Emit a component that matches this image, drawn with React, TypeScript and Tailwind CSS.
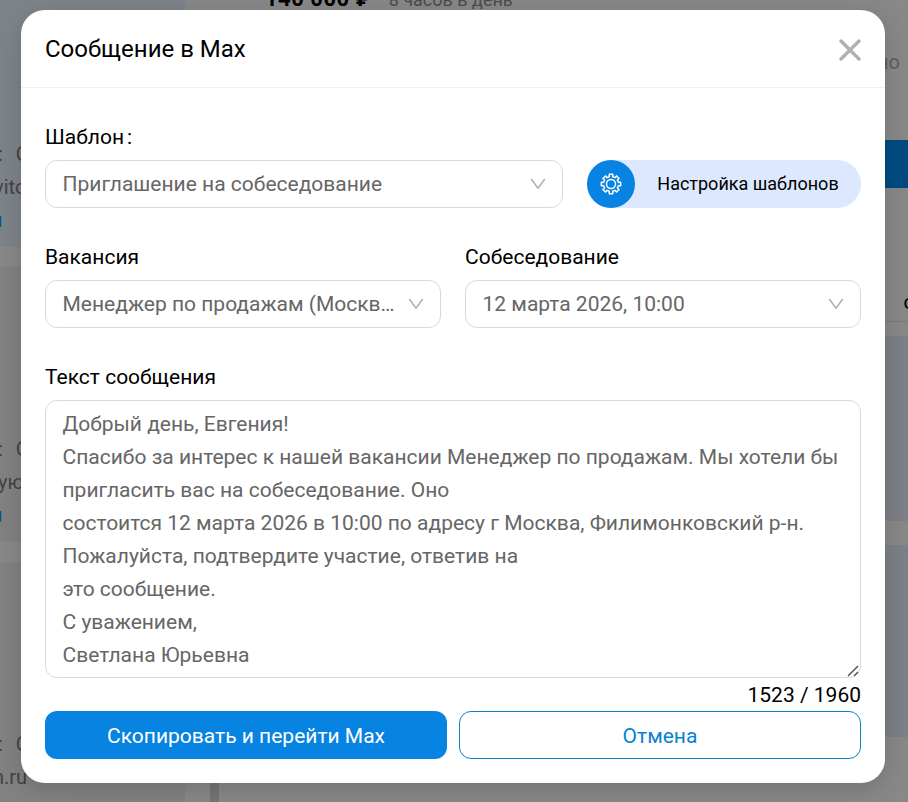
import React, { useState } from "react";

const MESSAGE = [
  "Добрый день, Евгения!",
  "Спасибо за интерес к нашей вакансии Менеджер по продажам. Мы хотели бы",
  "пригласить вас на собеседование. Оно",
  "состоится 12 марта 2026 в 10:00 по адресу г Москва, Филимонковский р-н.",
  "Пожалуйста, подтвердите участие, ответив на",
  "это сообщение.",
  "С уважением,",
  "Светлана Юрьевна",
].join("\n");

const GEAR_TEETH = [0, 45, 90, 135, 180, 225, 270, 315];

// Outline of the gear, one tooth per 45 degrees
function gearPath() {
  const point = (radius: number, deg: number) => {
    const a = ((deg - 90) * Math.PI) / 180;
    return `${(11 + radius * Math.cos(a)).toFixed(2)} ${(11 + radius * Math.sin(a)).toFixed(2)}`;
  };
  const parts = GEAR_TEETH.map(
    (d) => `${point(7.5, d - 13)} L${point(9.8, d - 10.5)} L${point(9.8, d + 10.5)} L${point(7.5, d + 13)}`
  );
  return `M${parts.join(" L")} Z`;
}

function GearIcon() {
  return (
    <svg width="22" height="22" viewBox="0 0 22 22" fill="none" stroke="white" strokeWidth="1.5" strokeLinejoin="round">
      <path d={gearPath()} />
      <circle cx="11" cy="11" r="4.5" />
    </svg>
  );
}

function ChevronIcon() {
  return (
    <svg className="shrink-0" width="16" height="16" viewBox="0 0 16 16" fill="none" stroke="#b0b0b0" strokeWidth="1.5">
      <path d="M1.2 3L8 12.2L14.8 3" strokeLinejoin="round" />
    </svg>
  );
}

function SelectBox({ value, className }: { value: string; className: string }) {
  return (
    <button
      type="button"
      className={`flex h-12 items-center justify-between gap-3 rounded-xl border border-[#d9d9d9] bg-white pr-[16px] pl-[16.5px] text-[#666] ${className}`}
    >
      <span className="truncate pt-[2px]">{value}</span>
      <ChevronIcon />
    </button>
  );
}

function Backdrop() {
  return (
    <div className="flex h-full w-full overflow-hidden bg-[#888888] text-[20px] text-[#434343]">
      <div className="flex w-[210px] shrink-0 flex-col bg-[#888888]">
        <div className="h-[247px] w-[185px] bg-[#7e838a] pt-[138px] leading-[33px]">
          <div className="-ml-[2px] whitespace-pre">:<span className="ml-[13px]">О</span></div>
          <div className="-ml-[6px]">vito</div>
          <div className="-ml-[9px] text-[#005a96]">и</div>
        </div>
        <div className="mt-[19px] h-[276px] w-[185px] bg-[#828282] pt-[167px] leading-[33px]">
          <div className="-ml-[2px] whitespace-pre">:<span className="ml-[13px]">О</span></div>
          <div className="-ml-[2px]">ую</div>
          <div className="-ml-[9px] text-[#005a96]">и</div>
        </div>
        <div className="mt-[20px] h-[240px] w-[185px] bg-[#828282] pt-[166px] leading-[33px]">
          <div className="-ml-[2px] whitespace-pre">:<span className="ml-[13px]">О</span></div>
          <div className="-ml-[7px]">n.ru</div>
        </div>
      </div>
      <div className="flex w-3 shrink-0 items-end">
        <div className="h-[120px] w-[9px] bg-[#757575]" />
      </div>
      <div className="flex min-w-0 flex-1 flex-col">
        <div className="flex h-[46px] shrink-0 items-start pl-[43px]">
          <span className="-mt-[16px] text-[22px] leading-[30px] font-bold tracking-[0.5px] text-black">140 000 ₽</span>
          <span className="-mt-[15px] ml-[17px] text-[18px] leading-[30px] text-[#4c4c4c]">8 часов в день</span>
        </div>
        <div className="h-[94px] shrink-0 pr-[8px] text-right leading-8 text-[#5c5c5c]">можно</div>
        <div className="h-12 shrink-0 bg-[#004b82]" />
        <div className="h-[134px] shrink-0 border-b border-[#7a7a7a] pt-[98px] text-right leading-8 text-black">
          <span className="-mr-[7px]">о</span>
        </div>
        <div className="mt-[14px] h-[185px] shrink-0 bg-[#7c8187]" />
        <div className="mt-[24px] h-[192px] shrink-0 bg-[#7c8187]" />
      </div>
    </div>
  );
}

export default function App() {
  const [message, setMessage] = useState(MESSAGE);

  return (
    <div className="relative h-[802px] w-[908px] overflow-hidden font-['Roboto',sans-serif]">
      <Backdrop />

      <div
        role="dialog"
        className="absolute top-[10px] left-[21px] flex h-[773px] w-[864px] flex-col rounded-3xl bg-white text-[21px] text-black shadow-[0_6px_24px_rgba(0,0,0,0.16)]"
      >
        <header className="flex h-[78px] items-center justify-between border-b border-[#f0f0f0] px-6">
          <h2 className="text-[24px] leading-9">Сообщение в Max</h2>
          <button type="button" aria-label="Закрыть" className="pt-[2px]">
            <svg width="22" height="22" viewBox="0 0 22 22" fill="none" stroke="#b0b0b0" strokeWidth="3.4" strokeLinecap="round">
              <path d="M2 2L20 20M20 2L2 20" />
            </svg>
          </button>
        </header>

        <div className="px-6 pt-8">
          <label className="block h-10 pt-px leading-[33px]">
            Шаблон<span className="ml-[3px]">:</span>
          </label>
          <div className="flex gap-6">
            <SelectBox value="Приглашение на собеседование" className="w-[518px]" />
            <button type="button" className="flex h-12 flex-1 items-center rounded-full bg-[#dce8fd] text-[18px]">
              <span className="flex h-12 w-12 items-center justify-center rounded-full bg-[#0783e2]">
                <GearIcon />
              </span>
              <span className="flex-1 pb-[2px] text-center">Настройка шаблонов</span>
            </button>
          </div>

          <div className="mt-8 grid grid-cols-2 gap-6">
            <div>
              <label className="block h-10 pt-px leading-[33px]">Вакансия</label>
              <SelectBox value="Менеджер по продажам (Москва и область)" className="w-full" />
            </div>
            <div>
              <label className="block h-10 pt-px leading-[33px]">Собеседование</label>
              <SelectBox value="12 марта 2026, 10:00" className="w-full" />
            </div>
          </div>

          <label className="mt-8 block h-10 pt-px leading-[33px]">Текст сообщения</label>
          <div className="relative h-[278px]">
            <textarea
              value={message}
              onChange={(e) => setMessage(e.target.value)}
              className="block h-[278px] w-full resize-none overflow-hidden rounded-xl border border-[#d9d9d9] bg-white px-[16.5px] pt-[7px] pb-[5px] leading-[33px] text-[#666] outline-none"
            />
            <svg className="absolute right-[2px] bottom-[1px]" width="12" height="12" viewBox="0 0 12 12" stroke="#555" strokeWidth="1.5">
              <path d="M1 11L11 1M7 11L11 7" />
            </svg>
          </div>
          <div className="h-[33px] pt-px text-right leading-[33px]">1523 / 1960</div>

          <div className="grid grid-cols-2 gap-3">
            <button type="button" className="h-12 rounded-xl bg-[#0783e2] pt-[3px] text-white">
              Скопировать и перейти Max
            </button>
            <button type="button" className="h-12 rounded-xl border border-[#0783c2] pt-[3px] text-[#0783d2]">
              Отмена
            </button>
          </div>
        </div>
      </div>
    </div>
  );
}
